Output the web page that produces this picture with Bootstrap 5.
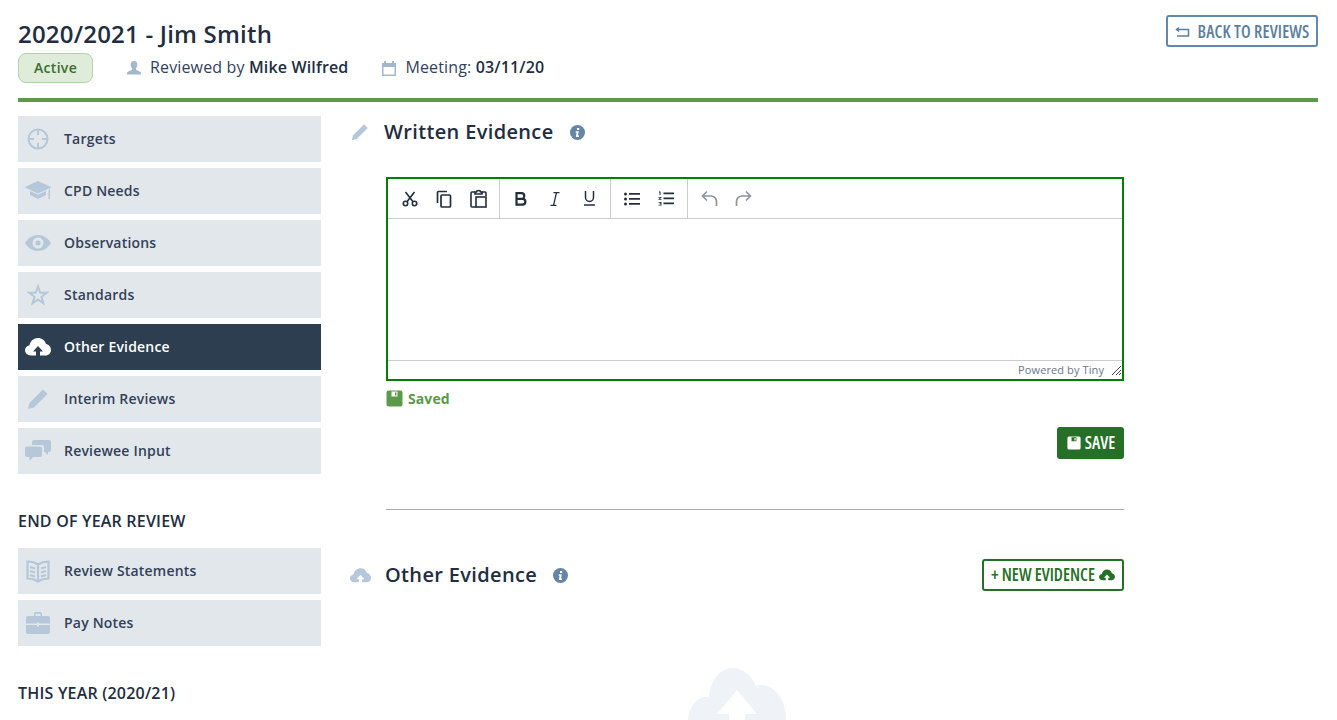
<!DOCTYPE html>
<html lang="en">
<head>
  <meta charset="UTF-8">
  <title>Review</title>
  <link href="https://cdn.jsdelivr.net/npm/bootstrap@5.3.2/dist/css/bootstrap.min.css" rel="stylesheet">
  <style>
    html, body { height: 720px; overflow: hidden; }
    body { font-family: "Open Sans", sans-serif; color: #222d3f; background: #fff; font-size: 16px; }
    .page { padding: 0 19px 0 18px; }
    .page-head { height: 102px; border-bottom: 4px solid #5a9a48; padding-top: 17px; }
    .page-title { font-size: 24px; font-weight: 600; line-height: 33px; margin: 0 0 3px; letter-spacing: .2px; }
    .meta { height: 30px; font-size: 16px; color: #33415a; letter-spacing: .15px; }
    .meta b { font-weight: 600; color: #222d3f; }
    .meta span span { padding-bottom: 2px; }
    .status { width: 75px; height: 30px; border: 1px solid #b3d3aa; background: #deecd9; color: #3c6e2d; border-radius: 8px; font-size: 14px; font-weight: 600; margin-right: 33px; padding-bottom: 2px; letter-spacing: .3px; }
    .meta-item { margin-right: 33px; }
    .meta svg { margin-right: 8px; }
    .cond { font-stretch: 75%; font-weight: 600; text-transform: uppercase; }
    .btn-back { width: 152px; height: 32px; margin-top: -2px; border: 2px solid #6388a9; border-radius: 3px; color: #5b7fa0; font-size: 17px; background: #fff; padding: 1px 0 0; letter-spacing: .15px; }
    .side { width: 303px; flex: none; padding-top: 14px; }
    .side-item { display: flex; align-items: center; height: 46px; margin-bottom: 6px; padding-bottom: 2px; background: #e2e7eb; color: #33415a; font-size: 14px; font-weight: 600; letter-spacing: .2px; text-decoration: none; }
    .side-item .ico { width: 40px; margin-right: 6px; margin-bottom: -2px; display: flex; justify-content: center; align-items: center; color: #b5c7d9; flex: none; }
    .side-item.active { background: #2c3e50; color: #fff; }
    .side-item.active .ico { color: #fff; }
    .side-title { font-size: 16px; font-weight: 600; text-transform: uppercase; line-height: 22px; color: #222d3f; letter-spacing: .2px; }
    .side-title-first { margin-top: 36px; margin-bottom: 16px; }
    .side-title-last { margin-top: 36px; }
    .main { width: 803px; flex: none; }
    .section-row { height: 28px; margin-top: 16px; }
    .section-row2 { height: 32px; width: 803px; }
    .section-head { font-size: 20px; font-weight: 600; color: #222d3f; line-height: 28px; margin: 0; letter-spacing: .35px; }
    .section-ico { width: 31px; color: #b5c7d9; flex: none; margin-left: 30px; margin-right: 2px; display: flex; }
    .section-ico2 { width: 33px; margin-left: 29px; margin-right: 2px; }
    .info { margin-left: 16px; color: #6485a8; display: flex; }
    .body-col { margin-left: 65px; width: 738px; }
    .editor-col { margin-top: 31px; }
    .editor { height: 204px; border: 2px solid #008000; display: flex; flex-direction: column; }
    .toolbar { height: 40px; flex: none; border-bottom: 1px solid #ccc; display: flex; padding-left: 1px; }
    .tgroup { display: flex; padding: 0 4px; border-right: 1px solid #ccc; }
    .tgroup:last-child { border-right: 0; }
    .tbtn { width: 34px; height: 39px; display: flex; align-items: center; justify-content: center; color: #222f3e; }
    .tbtn.off { color: #8d949c; }
    .edit-area { flex: 1; }
    .statusbar { height: 19px; flex: none; border-top: 1px solid #ccc; font-size: 11px; color: #6b7687; display: flex; justify-content: flex-end; align-items: center; padding-right: 1px; letter-spacing: .1px; }
    .saved { color: #5a9a48; font-size: 14px; font-weight: 700; margin-top: 7px; height: 20px; margin-bottom: 1px; letter-spacing: .1px; }
    .saved svg { margin-right: 5px; }
    .btn-save { width: 67px; height: 32px; background: #266f26; border: 0; border-radius: 3px; color: #fff; font-size: 17px; padding: 0 0 0 1px; margin-top: 18px; }
    .rule { height: 1px; background: #aaa; margin-top: 50px; margin-bottom: 49px; }
    .btn-new { width: 142px; height: 32px; border: 2px solid #266f26; border-radius: 3px; background: #fff; color: #266f26; font-size: 17px; padding: 0; }
    .empty-cloud { color: #eff2f6; margin-top: 77px; margin-left: 47px; }
  </style>
</head>
<body>
  <div class="page">
    <!-- Header -->
    <div class="page-head d-flex justify-content-between align-items-start">
      <div>
        <h1 class="page-title">2020/2021 - Jim Smith</h1>
        <div class="meta d-flex align-items-center">
          <span class="status d-flex align-items-center justify-content-center">Active</span>
          <span class="meta-item d-flex align-items-center">
            <svg width="16" height="16" viewBox="0 0 16 16" fill="#a4b8cc"><path d="M8 1c2.200 0 3.400 1.700 3.400 3.800 0 1.500-.7 2.800-1.500 3.500v1.200c0 .8 4.600 1.500 5.100 3.500v1.500H1v-1.500c.5-2 5.100-2.700 5.100-3.500V8.300C5.300 7.600 4.600 6.300 4.600 4.800 4.600 2.700 5.800 1 8 1z"/></svg>
            <span>Reviewed by <b>Mike Wilfred</b></span>
          </span>
          <span class="d-flex align-items-center">
            <svg width="16" height="16" viewBox="0 0 16 16" fill="#a4b8cc"><path d="M1 3h2V1h2v2h6V1h2v2h2v13H1V3zm1.500 4v7.500h11V7h-11z"/></svg>
            <span>Meeting: <b>03/11/20</b></span>
          </span>
        </div>
      </div>
      <button class="btn btn-back cond d-flex align-items-center justify-content-center">
        <svg class="me-2" width="15" height="12" viewBox="0 0 15 12" fill="none" stroke="currentColor" stroke-width="1.500"><path d="M4 1.500L1.500 3.500 4 5.500M1.500 3.500H13.500V10H2"/></svg>
        Back to Reviews
      </button>
    </div>

    <div class="d-flex">
      <!-- Sidebar -->
      <div class="side">
        <a class="side-item" href="#"><span class="ico">
          <svg width="24" height="24" viewBox="0 0 24 24" fill="none" stroke="currentColor" stroke-width="2"><circle cx="12" cy="12" r="9.500"/><path d="M12 2V8M12 16v6M2 12H8M16 12h6"/></svg>
        </span>Targets</a>
        <a class="side-item" href="#"><span class="ico">
          <svg width="26" height="20" viewBox="0 0 26 20" fill="currentColor"><path d="M13 0L26 6v.5l-13 6-13-6V6z"/><path d="M5 10l8 3.800 8-3.800v4l-8 4-8-4z"/><path d="M23.500 8.500h1.500V18h-1.500z"/></svg>
        </span>CPD Needs</a>
        <a class="side-item" href="#"><span class="ico">
          <svg width="26" height="16" viewBox="0 0 26 16" fill="currentColor"><path fill-rule="evenodd" d="M0 8C3 3 7.500 0 13 0s10 3 13 8c-3 5-7.500 8-13 8S3 13 0 8zm13-5.500a5.500 5.500 0 100 11 5.500 5.500 0 000-11zm0 3a2.500 2.500 0 110 5 2.500 2.500 0 010-5z"/></svg>
        </span>Observations</a>
        <a class="side-item" href="#"><span class="ico">
          <svg width="22" height="22" viewBox="0 0 22 22" fill="none" stroke="currentColor" stroke-width="2" stroke-linejoin="miter"><path d="M11 2.500l2.300 6.300h6.400l-5.200 4 1.900 6.500-5.400-3.900-5.400 3.900 1.900-6.500-5.200-4h6.400z"/></svg>
        </span>Standards</a>
        <a class="side-item active" href="#"><span class="ico">
          <svg width="26" height="18" viewBox="0 0 26 18" fill="currentColor"><path d="M6 17.500C2.700 17.500 0 15.200 0 12.300c0-2.500 1.900-4.500 4.500-5C5.300 3 8.800 0 13 0c3.800 0 7 2.500 8 6 2.800.5 5 3 5 6 0 3-2.300 5.500-5.500 5.500H15v-4h3l-5-5.500-5 5.500h3v4z"/></svg>
        </span>Other Evidence</a>
        <a class="side-item" href="#"><span class="ico">
          <svg width="22" height="22" viewBox="0 0 22 22" fill="currentColor"><path d="M16 1.500l4.500 4.500L7 19.500 1 21l1.500-6z"/></svg>
        </span>Interim Reviews</a>
        <a class="side-item" href="#"><span class="ico">
          <svg width="26" height="22" viewBox="0 0 26 22" fill="currentColor"><path d="M9 0h15a2 2 0 012 2v8a2 2 0 01-2 2h-1v3l-3-3h-1V7a2 2 0 00-2-2H7V2a2 2 0 012-2z"/><path d="M2 6.500h13a2 2 0 012 2V15a2 2 0 01-2 2H8l-3.500 4v-4H2a2 2 0 01-2-2V8.500a2 2 0 012-2z"/></svg>
        </span>Reviewee Input</a>

        <div class="side-title side-title-first">End of Year Review</div>
        <a class="side-item" href="#"><span class="ico">
          <svg width="24" height="23" viewBox="0 0 24 23" fill="none" stroke="currentColor" stroke-width="2.200"><path d="M12 4.500C9 2.500 5 1.500 1.500 1.500v17c3.500 0 7.500 1 10.500 3 3-2 7-3 10.500-3v-17C19 1.500 15 2.500 12 4.500zM12 4.500v17"/><path d="M4 7l5 1.500M4 11l5 1.500M4 15l5 1.500M20 7l-5 1.500M20 11l-5 1.500M20 15l-5 1.500"/></svg>
        </span>Review Statements</a>
        <a class="side-item" href="#"><span class="ico">
          <svg width="24" height="22" viewBox="0 0 24 22" fill="currentColor"><path fill-rule="evenodd" d="M8 4V2a2 2 0 012-2h4a2 2 0 012 2v2h6a2 2 0 012 2v5.500H13v-1h-2v1H0V6a2 2 0 012-2h6zm1.500-2.300V4h5V1.700z"/><path d="M0 13h11v1.500h2V13h11v7a2 2 0 01-2 2H2a2 2 0 01-2-2z"/></svg>
        </span>Pay Notes</a>

        <div class="side-title side-title-last">This Year (2020/21)</div>
      </div>

      <!-- Main -->
      <div class="main">
        <div class="section-row d-flex align-items-center">
          <span class="section-ico">
            <svg width="18" height="18" viewBox="0 0 22 22" fill="currentColor"><path d="M16 1.500l4.500 4.500L7 19.500 1 21l1.500-6z"/></svg>
          </span>
          <h2 class="section-head">Written Evidence</h2>
          <span class="info"><svg width="15" height="15" viewBox="0 0 15 15"><circle cx="7.500" cy="7.500" r="7.500" fill="currentColor"/><path fill="#fff" d="M7 3h2.200v2H7zM5.800 6.200h3l-.8 4.300h1V12H5.800l.8-4.300h-1z"/></svg></span>
        </div>

        <div class="body-col editor-col">
          <div class="editor">
            <div class="toolbar">
              <div class="tgroup">
                <span class="tbtn"><svg width="16" height="16" viewBox="0 0 16 16" fill="none" stroke="currentColor" stroke-width="1.600"><circle cx="3.500" cy="12.500" r="2.200"/><circle cx="12.500" cy="12.500" r="2.200"/><path d="M5 10.800L12.500 1M11 10.800L3.500 1"/></svg></span>
                <span class="tbtn"><svg width="16" height="18" viewBox="0 0 16 18" fill="none" stroke="currentColor" stroke-width="1.700"><path d="M1.500 13V2.500a1 1 0 011-1H11"/><rect x="5" y="5" width="9.500" height="12" rx="1"/></svg></span>
                <span class="tbtn"><svg width="17" height="19" viewBox="0 0 17 19" fill="none" stroke="currentColor" stroke-width="1.600"><path d="M5 3H2a1 1 0 00-1 1v13a1 1 0 001 1h4M12 3h3a1 1 0 011 1v3"/><rect x="6" y="8" width="10" height="10"/><path d="M5 5V3h1.500C6.500 1 10.500 1 10.500 3H12v2z"/></svg></span>
              </div>
              <div class="tgroup">
                <span class="tbtn"><svg width="12" height="14" viewBox="0 0 12 14" fill="none" stroke="currentColor" stroke-width="2.200"><path d="M1.500 1.200h5a2.800 2.800 0 010 5.600h-5zm0 5.600h6a2.900 2.900 0 010 5.800h-6z"/></svg></span>
                <span class="tbtn"><svg width="10" height="14" viewBox="0 0 10 14" fill="none" stroke="currentColor" stroke-width="1.300"><path d="M3.500 .7H9.500M.5 13.300H6.500M6.500 .7L3.500 13.300"/></svg></span>
                <span class="tbtn"><svg width="11" height="15" viewBox="0 0 11 15" fill="none" stroke="currentColor" stroke-width="1.500"><path d="M1.500 0V6.500a4 4 0 008 0V0"/><path d="M0 14h11"/></svg></span>
              </div>
              <div class="tgroup">
                <span class="tbtn"><svg width="16" height="14" viewBox="0 0 16 14" fill="currentColor"><circle cx="1.500" cy="2" r="1.500"/><circle cx="1.500" cy="7" r="1.500"/><circle cx="1.500" cy="12" r="1.500"/><path d="M5 1h11v1.800H5zM5 6h11v1.800H5zM5 11h11v1.800H5z"/></svg></span>
                <span class="tbtn"><svg width="16" height="15" viewBox="0 0 16 15" fill="currentColor"><path d="M5.500 1.500H16v1.800H5.500zM5.500 6.500H16v1.800H5.500zM5.500 11.500H16v1.800H5.500z"/><path d="M1 .5h1.500v3.500h-1V1.500H1zM.5 6h3v.8L1.800 8h1.700v.8H.5V8l1.800-1.200H.5zM.5 11h3v3.500h-3v-.8h2v-.6h-1v-.7h1v-.6h-2z"/></svg></span>
              </div>
              <div class="tgroup">
                <span class="tbtn off"><svg width="17" height="17" viewBox="0 0 17 17" fill="none" stroke="currentColor" stroke-width="1.700"><path d="M6 1.500L1.500 6 6 10.500M1.500 6H10a5.500 5.500 0 015.500 5.500V16"/></svg></span>
                <span class="tbtn off"><svg width="17" height="17" viewBox="0 0 17 17" fill="none" stroke="currentColor" stroke-width="1.700"><path d="M11 1.500L15.500 6 11 10.500M15.500 6H7a5.500 5.500 0 00-5.500 5.500V16"/></svg></span>
              </div>
            </div>
            <div class="edit-area"></div>
            <div class="statusbar">
              <span>Powered by Tiny</span>
              <svg class="ms-2" width="9" height="9" viewBox="0 0 9 9" fill="none" stroke="#444" stroke-width="1"><path d="M9 0L0 9M9 4L4 9M9 7L7 9"/></svg>
            </div>
          </div>
          <div class="saved d-flex align-items-center">
            <svg width="17" height="17" viewBox="0 0 17 17" fill="currentColor"><path fill-rule="evenodd" d="M2.500 .5h12a2 2 0 012 2v12a2 2 0 01-2 2h-12a2 2 0 01-2-2v-12a2 2 0 012-2zm3 1v5h6v-5zm3.500 1h1.500v3H9z"/></svg>
            <span>Saved</span>
          </div>
          <div class="d-flex justify-content-end">
            <button class="btn btn-save cond d-flex align-items-center justify-content-center">
              <svg class="me-1" width="14" height="14" viewBox="0 0 17 17" fill="currentColor"><path fill-rule="evenodd" d="M2.500 .5h12a2 2 0 012 2v12a2 2 0 01-2 2h-12a2 2 0 01-2-2v-12a2 2 0 012-2zm3 1v5h6v-5zm3.500 1h1.500v3H9z"/></svg>
              Save
            </button>
          </div>
          <div class="rule"></div>
        </div>

        <div class="section-row2 d-flex align-items-center">
          <span class="section-ico section-ico2">
            <svg width="21" height="15" viewBox="0 0 26 18" fill="currentColor"><path d="M6 17.500C2.700 17.500 0 15.200 0 12.300c0-2.500 1.900-4.500 4.500-5C5.300 3 8.800 0 13 0c3.800 0 7 2.500 8 6 2.800.5 5 3 5 6 0 3-2.300 5.500-5.500 5.500H15v-4h3l-5-5.500-5 5.500h3v4z"/></svg>
          </span>
          <h2 class="section-head">Other Evidence</h2>
          <span class="info"><svg width="15" height="15" viewBox="0 0 15 15"><circle cx="7.500" cy="7.500" r="7.500" fill="currentColor"/><path fill="#fff" d="M7 3h2.200v2H7zM5.800 6.200h3l-.8 4.300h1V12H5.800l.8-4.300h-1z"/></svg></span>
          <button class="btn btn-new cond d-flex align-items-center justify-content-center ms-auto">
            + New Evidence
            <svg class="ms-1" width="16" height="12" viewBox="0 0 26 18" fill="currentColor"><path d="M6 17.500C2.700 17.500 0 15.200 0 12.300c0-2.500 1.900-4.500 4.500-5C5.300 3 8.800 0 13 0c3.800 0 7 2.500 8 6 2.800.5 5 3 5 6 0 3-2.300 5.500-5.500 5.500H15v-4h3l-5-5.500-5 5.500h3v4z"/></svg>
          </button>
        </div>

        <div class="body-col d-flex justify-content-center empty-cloud">
          <svg width="98" height="80" viewBox="0 0 98 80" fill="currentColor"><path d="M20 80C8 80 0 68 0 54c0-14 8-25 18-25 1 0 2 0 3 .5C22 12 33 0 44 0c11 0 20 8 24 18 2-1 3-1 5-1 14 0 25 15 25 33 0 17-8 30-20 30H57V46h12L49 22 29 46h12v34z"/></svg>
        </div>
      </div>
    </div>
  </div>
</body>
</html>
